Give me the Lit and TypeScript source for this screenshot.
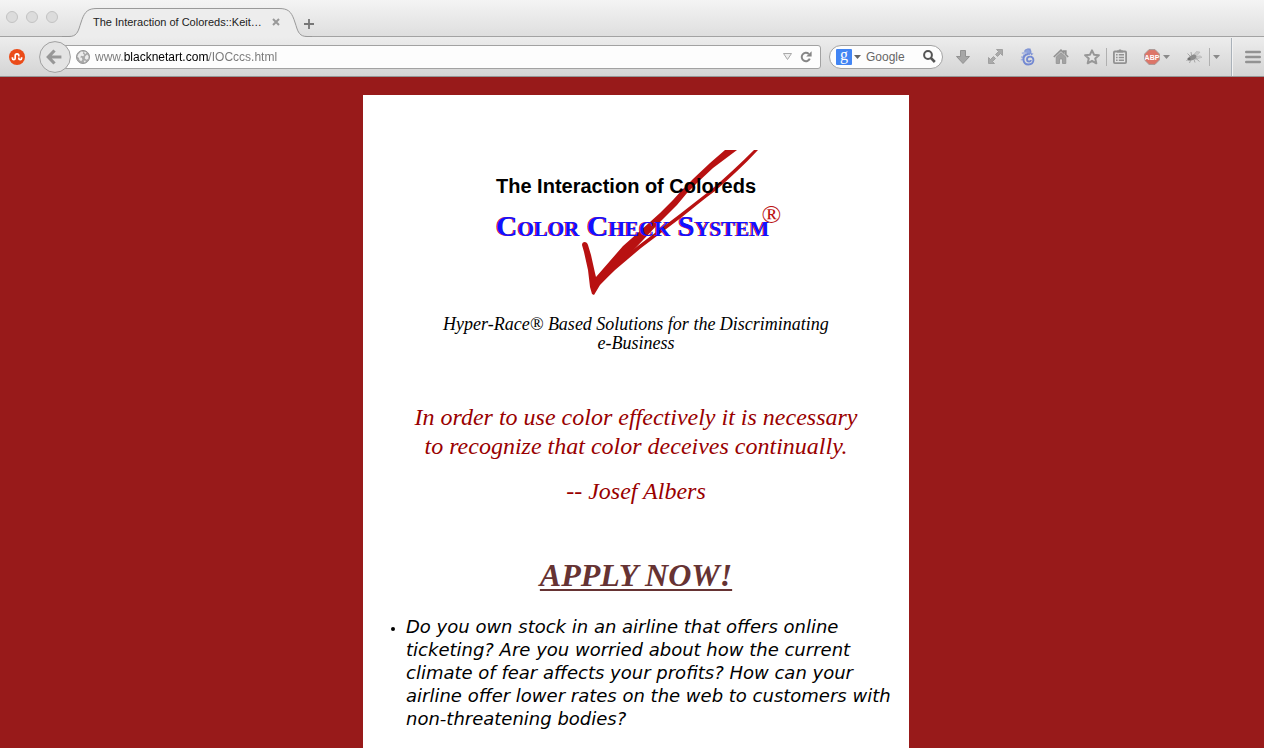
import { LitElement, html, css } from "lit";
import { customElement } from "lit/decorators.js";

const triangle = html`<svg width="7" height="4" viewBox="0 0 7 4" aria-hidden="true"><path d="M0 0h7L3.5 4z" fill="#8a8a8a"/></svg>`;

const icons = {
  stumble: html`<svg width="16" height="16" viewBox="0 0 16 16"><circle cx="8" cy="8" r="8" fill="#eb4b18"/><path d="M3.400 8.200v1.100a1.400 1.400 0 0 0 2.800 0V6.700a1.800 1.800 0 0 1 3.600 0v.7M9.800 8.500v.8a1.400 1.400 0 0 0 2.800 0V8.200" fill="none" stroke="#fff" stroke-width="1.700"/></svg>`,
  back: html`<svg width="32" height="32" viewBox="0 0 32 32"><circle cx="16" cy="16" r="15.4" fill="#e4e4e4" stroke="#a0a0a0"/><path d="M15.500 9.500 9.300 16l6.200 6.500M9.800 16h12.600" fill="none" stroke="#979797" stroke-width="3.200"/></svg>`,
  globe: html`<svg width="14" height="14" viewBox="0 0 14 14"><circle cx="7" cy="7" r="6.5" fill="#a9a9a9" stroke="#979797"/><path d="M2.2 4.5 5 1.6l2.6.2-.8 1.8 1.5 1.2-1 1.4-2.2-.4-.8 1.6 1.6.4.5 1.7-1.2 1.7L3.4 10 3 8 1.4 6.8zM9.2 6.2l2-1.7 1.4 1.8-.3 2.5-1.8 1-1.7-1.3zM8.4 1.5l2.2 1-1 1.4-1.4-.8zM7.6 10.8l1.8-.4.4 1.2-1.4.8z" fill="#ececec"/></svg>`,
  reload: html`<svg width="12" height="12" viewBox="0 0 12 12"><path d="M9.8 7.6A4.2 4.2 0 1 1 8.8 2.9" fill="none" stroke="#868686" stroke-width="2"/><path d="M11.6.2v5.4H6.2z" fill="#868686"/></svg>`,
  search: html`<svg width="13" height="13" viewBox="0 0 13 13"><circle cx="5" cy="5" r="3.9" fill="none" stroke="#555" stroke-width="2"/><path d="m7.8 7.8 4 4.2" stroke="#555" stroke-width="2.6"/></svg>`,
  download: html`<svg width="14" height="14" viewBox="0 0 14 14"><path d="M4.5.5h5v6h4L7 13.5.5 6.500h4z" fill="#a6a6a6" stroke="#919191"/></svg>`,
  expand: html`<svg width="15" height="15" viewBox="0 0 15 15"><path d="M8.500.5h6v6l-2-2-3 3-2-2 3-3zM.5 8.500l2 2 3-3 2 2-3 3 2 2h-6z" fill="#aaa" stroke="#979797" stroke-width=".8"/></svg>`,
  seahorse: html`<svg width="15" height="18" viewBox="0 0 15 18"><path d="M4.500 3.600C5.400.6 9.600.2 10.600 3c.6 1.600-.4 3-2 3.400" fill="#8fa3dc" stroke="#8095d4" stroke-width="1.500"/><path d="M6.600 4.600 1.800 5.200M1 9l4 .4M.8 11.800l3.600-.6M3 7l3 .8" stroke="#a5b3e0" stroke-width="1.600"/><path d="M8.500 6C4.800 6.600 3.200 9 3.400 11.600c.3 3 2.400 4.900 5 4.900 2.800 0 4.900-1.700 5-4.200 0-2.200-1.500-3.700-3.400-3.700-1.800 0-3 1.100-3 2.700 0 1.400 1 2.300 2.100 2.300 1 0 1.700-.7 1.700-1.500" fill="none" stroke="#7389d2" stroke-width="1.900"/><path d="m8.500 1.500 1.800-1.200.3 2zM11 5l2.600.8L11 7.600z" fill="#7d91d4"/></svg>`,
  home: html`<svg width="16" height="15" viewBox="0 0 16 15"><path d="M.8 8 8 1.200l2.800 2.600V2.200h2v3.500L15.200 8" fill="none" stroke="#929292" stroke-width="1.700"/><path d="M3.200 8 8 3.600 12.800 8v6.500H9.500V10h-3v4.500H3.200z" fill="#a3a3a3" stroke="#929292" stroke-width=".8"/></svg>`,
  star: html`<svg width="16" height="16" viewBox="0 0 16 16"><path d="m8 1.300 2 4.400 4.900.5-3.700 3.200 1.100 4.900L8 11.800l-4.300 2.500 1.100-4.900L1.100 6.200 6 5.700z" fill="#e4e4e4" stroke="#979797" stroke-width="2" stroke-linejoin="round"/></svg>`,
  list: html`<svg width="14" height="15" viewBox="0 0 14 15"><rect x=".9" y="2.500" width="12.200" height="11.600" rx="1" fill="#e4e4e4" stroke="#929292" stroke-width="1.800"/><path d="M4 3.500V1.500h1.500L6 .5h2l.5 1H10v2z" fill="#929292"/><path d="M3 5.800h1.600M5.800 5.800H11M3 8.500h1.600M5.800 8.500H11M3 11.200h1.600M5.800 11.200H11" stroke="#929292" stroke-width="1.500"/></svg>`,
  abp: html`<svg width="16" height="16" viewBox="0 0 16 16"><path d="M5 .6h6L15.400 5v6L11 15.400H5L.6 11V5z" fill="#dd7568" stroke="#a99a98"/><text x="8" y="10.800" text-anchor="middle" font-family="Liberation Sans, sans-serif" font-size="7" font-weight="700" fill="#fff">ABP</text></svg>`,
  fly: html`<svg width="17" height="14" viewBox="0 0 17 14"><path d="m6.500 6 4-4.500 3.500.6-4.600 5.200zM8 7.500l6-1.800 2 1.600-7 2.200z" fill="#c9c9c9" stroke="#aaa" stroke-width=".5"/><ellipse cx="6.500" cy="7.500" rx="4" ry="2.600" transform="rotate(-25 6.500 7.500)" fill="#8c8c8c"/><circle cx="3" cy="9" r="1.600" fill="#6f6f6f"/><path d="M5 9.500 3.500 13M8 9.500l1 3M10 8.500l3.500 3M4 6 1.500 3.500M5.500 5 5 2M1.800 9.500.5 11" stroke="#969696" stroke-width=".8"/></svg>`,
  menu: html`<svg width="16" height="14" viewBox="0 0 16 14"><path d="M1.200 2h13.600M1.200 7h13.600M1.200 12h13.600" stroke="#929292" stroke-width="2.400" stroke-linecap="round"/></svg>`,
};

@customElement("browser-chrome")
export class BrowserChrome extends LitElement {
  static styles = css`
    :host { display: block; font-family: "Liberation Sans", Arial, sans-serif; }
    svg { display: block; flex: none; }
    button { display: flex; align-items: center; justify-content: center; gap: 3px; padding: 0; border: 0; background: none; flex: none; }
    .tabs { display: flex; height: 37px; background: linear-gradient(#f4f4f4, #dedede); box-shadow: inset 0 -1px #a3a3a3; }
    .lights { display: flex; gap: 8px; padding: 11px 0 0 6px; width: 62px; box-sizing: border-box; }
    .light { width: 12px; height: 12px; box-sizing: border-box; border: 1px solid #c3c3c3; border-radius: 50%; background: #dcdcdc; flex: none; }
    .tab { display: grid; width: 250px; height: 37px; flex: none; }
    .shape, .label { grid-area: 1 / 1; }
    .label { display: flex; align-items: center; justify-content: space-between; height: 28px; box-sizing: border-box; margin-top: 8px; padding: 0 32px 0 31px; font-size: 11px; color: #222; }
    .plus { width: 12px; height: 12px; margin-top: 18px; margin-left: -9px; }
    .bar { display: flex; align-items: center; height: 40px; box-sizing: border-box; background: linear-gradient(#ededed, #d4d4d4); border-bottom: 1px solid #969696; }
    .stumble { margin-left: 9px; }
    .back { margin-left: 14px; z-index: 1; }
    .url { display: flex; align-items: center; flex: 1; height: 24px; box-sizing: border-box; margin-left: -8px; padding: 0 8px 0 12px; border: 1px solid #a2a2a2; border-radius: 0 3px 3px 0; background: #fdfdfd; }
    input { flex: 1; min-width: 0; border: 0; outline: 0; padding: 0; font: 12px/20px "Liberation Sans", Arial, sans-serif; background: none; color: #666; }
    .address { margin-left: 5px; height: 20px; color: transparent; background: linear-gradient(90deg, #777 28px, #000 28px 114px, #777 114px); -webkit-background-clip: text; background-clip: text; }
    .reload { margin-left: 8px; }
    .search { display: flex; align-items: center; width: 114px; height: 24px; box-sizing: border-box; margin-left: 8px; padding: 0 6px; border: 1px solid #a2a2a2; border-radius: 12px; background: #fdfdfd; }
    .g { width: 16px; height: 16px; border-radius: 1px; background: #4285f4; color: #fff; font: 16px/12px "Liberation Serif", serif; text-align: center; }
    .engine { margin-right: 5px; gap: 2px; }
    .tools { display: flex; align-items: center; padding-left: 13px; }
    .tools button { height: 24px; }
    .t1 { width: 14px; } .t2 { width: 15px; margin-left: 18px; } .t3 { width: 15px; margin-left: 17px; }
    .t4 { width: 16px; margin-left: 18px; } .t5 { width: 16px; margin-left: 15px; } .t6 { width: 14px; margin-left: 6px; }
    .t7 { margin-left: 17px; } .t8 { margin-left: 16px; } .t9 { margin-left: 3px; }
    .rule { width: 1px; height: 18px; background: #b0b0b0; margin-left: 6px; }
    .tall { height: 38px; margin-left: 11px; background: #a9b1b9; box-shadow: 1px 0 #f2f2f2; }
    .menu { margin-left: 13px; margin-right: 3px; }
  `;

  render() {
    return html`
      <div class="tabs">
        <div class="lights"><span class="light"></span><span class="light"></span><span class="light"></span></div>
        <div class="tab">
          <svg class="shape" width="250" height="37" viewBox="0 0 250 37">
            <path d="M0 37v-.5h7c7 0 9-4 11-11l2-6c3-8 6-11 15-11h182c9 0 12 3 15 11l2 6c2 7 4 11 11 11h5v.5z" fill="#ededed"/>
            <path d="M0 36.500h7c7 0 9-4 11-11l2-6c3-8 6-11 15-11h182c9 0 12 3 15 11l2 6c2 7 4 11 11 11h5" fill="none" stroke="#999"/>
          </svg>
          <div class="label"><span>The Interaction of Coloreds::Keit…</span>
            <button aria-label="Close tab"><svg width="8" height="8" viewBox="0 0 8 8"><path d="m1 1 6 6M7 1 1 7" stroke="#999" stroke-width="2"/></svg></button>
          </div>
        </div>
        <button class="plus" aria-label="New tab"><svg width="12" height="12" viewBox="0 0 12 12"><path d="M6 1v10M1 6h10" stroke="#777" stroke-width="1.800"/></svg></button>
      </div>
      <div class="bar">
        <button class="stumble" aria-label="StumbleUpon">${icons.stumble}</button>
        <button class="back" aria-label="Back">${icons.back}</button>
        <div class="url">
          ${icons.globe}
          <input class="address" aria-label="Address" value="www.blacknetart.com/IOCccs.html" />
          <button aria-label="History"><svg width="9" height="7" viewBox="0 0 9 7"><path d="M.5.5h8l-4 6z" fill="#eee" stroke="#aaa"/></svg></button>
          <button class="reload" aria-label="Reload">${icons.reload}</button>
        </div>
        <div class="search">
          <button class="engine" aria-label="Search engine"><span class="g">g</span><svg width="7" height="4" viewBox="0 0 7 4"><path d="M0 0h7L3.500 4z" fill="#666"/></svg></button>
          <input aria-label="Search" value="Google" />
          <button aria-label="Go">${icons.search}</button>
        </div>
        <div class="tools">
          <button class="t1" aria-label="Downloads">${icons.download}</button>
          <button class="t2" aria-label="Full screen">${icons.expand}</button>
          <button class="t3" aria-label="Seahorse">${icons.seahorse}</button>
          <button class="t4" aria-label="Home">${icons.home}</button>
          <button class="t5" aria-label="Bookmark">${icons.star}</button>
          <span class="rule"></span>
          <button class="t6" aria-label="Bookmarks list">${icons.list}</button>
          <button class="t7" aria-label="Adblock Plus">${icons.abp}${triangle}</button>
          <button class="t8" aria-label="Firebug">${icons.fly}</button>
          <span class="rule"></span>
          <button class="t9" aria-label="More">${triangle}</button>
          <span class="rule tall"></span>
          <button class="menu" aria-label="Menu">${icons.menu}</button>
        </div>
      </div>
    `;
  }
}

@customElement("app-root")
export class AppRoot extends LitElement {
  static styles = css`
    :host { display: flex; flex-direction: column; min-height: 100vh; background: #981a1a; font-family: "Liberation Serif", "Times New Roman", serif; }
    .page { display: flex; flex: 1; justify-content: center; padding: 18px 0 0 8px; }
    .paper { width: 546px; box-sizing: border-box; padding: 55px 16px 16px; background: #fff; text-align: center; font-style: italic; }
    .logo { display: grid; width: 300px; margin: 0 auto; text-align: left; font-style: normal; }
    .check, .brand { grid-area: 1 / 1; }
    .brand { padding: 24px 0 0 10px; white-space: nowrap; }
    .name { font: bold 20px/24px "Liberation Sans", Arial, sans-serif; color: #000; }
    .system { padding-top: 10px; font-size: 30px; line-height: 36px; font-weight: 700; font-variant: small-caps; color: #11f; text-shadow: -1px 0 #c11; }
    .mark { margin-left: -8px; font-size: 26px; font-weight: 400; line-height: 0; vertical-align: 13px; color: #b11; text-shadow: none; }
    p, h1, ul { margin: 0; }
    .tagline { padding: 18px 60px 0; font-size: 18px; line-height: 19px; color: #000; }
    .keep { white-space: nowrap; }
    .quote { padding: 50px 30px 0; font-size: 24px; line-height: 29px; color: #900; }
    .author { padding-top: 16px; font-size: 24px; line-height: 29px; color: #900; }
    h1 { padding-top: 51px; font-size: 32px; line-height: 37px; }
    a { color: #633; text-decoration-thickness: 2px; text-underline-offset: 3px; }
    ul { padding: 21px 0 0 27px; text-align: left; font: italic 18px/23px "DejaVu Sans", Verdana, sans-serif; color: #000; }
    li::marker { font-size: 14px; }
  `;

  render() {
    return html`
      <browser-chrome></browser-chrome>
      <main class="page">
        <article class="paper">
          <div class="logo">
            <svg class="check" width="300" height="147" viewBox="0 0 300 147" aria-hidden="true">
              <path d="M96 95c0-4 5-4 6 0l3 10 4 18 1 4 27-31 17-15 20-18 13-13 9-10 11-11 17-16L239 0h12l-24 18-16 15-10 10-10 12-17 17-33 35-27 28-6 10-2-1-2-7-2-17-4-18z" fill="#b81111"/>
              <path d="M268 0h4c-14 15-28 28-43 41-12 9-22 17-33 26l-41 31-26 22-18 17-2-2 18-19 26-21 41-31 32-25c15-13 29-26 42-39z" fill="#b81111"/>
            </svg>
            <div class="brand">
              <div class="name">The Interaction of Coloreds</div>
              <div class="system">Color Check System<span class="mark">®</span></div>
            </div>
          </div>
          <p class="tagline">Hyper-Race® Based Solutions for the Discriminating <span class="keep">e-Business</span></p>
          <p class="quote">In order to use color effectively it is necessary to recognize that color deceives continually.</p>
          <p class="author">-- Josef Albers</p>
          <h1><a href="#apply">APPLY NOW!</a></h1>
          <ul>
            <li>Do you own stock in an airline that offers online ticketing? Are you worried about how the current climate of fear affects your profits? How can your airline offer lower rates on the web to customers with non-threatening bodies?</li>
          </ul>
        </article>
      </main>
    `;
  }
}
